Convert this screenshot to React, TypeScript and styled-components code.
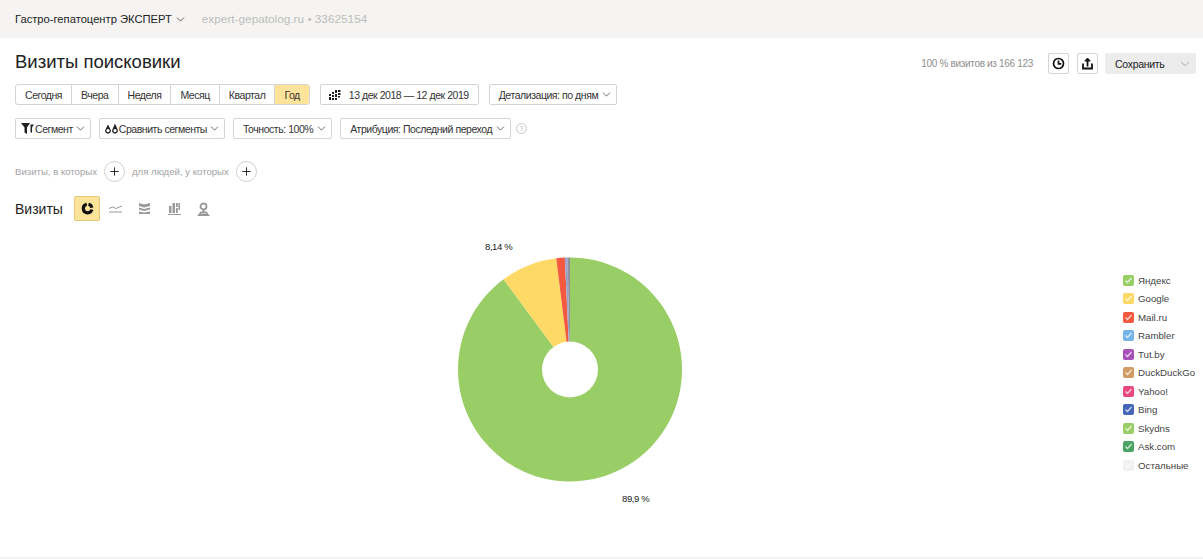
import React from "react";
import styled, { createGlobalStyle } from "styled-components";
import { ChevronDown, Plus } from "lucide-react";

const GlobalStyle = createGlobalStyle`
	html, body {
		margin: 0;
		padding: 0;
		background: #fff;
		color: #222;
		font-family: "Liberation Sans", Arial, sans-serif;
		font-size: 11px;
	}
`;

const periods = ["Сегодня", "Вчера", "Неделя", "Месяц", "Квартал", "Год"];

const legend = [
	{ name: "Яндекс", color: "#98ce65" },
	{ name: "Google", color: "#ffd966" },
	{ name: "Mail.ru", color: "#f4583f" },
	{ name: "Rambler", color: "#74b4e8" },
	{ name: "Tut.by", color: "#a651b8" },
	{ name: "DuckDuckGo", color: "#d39b66" },
	{ name: "Yahoo!", color: "#e9487f" },
	{ name: "Bing", color: "#4565b9" },
	{ name: "Skydns", color: "#98ce65" },
	{ name: "Ask.com", color: "#4aa364" },
	{ name: "Остальные", color: "#f1f1f0" },
];

const slices = [
	{ share: 89.9, color: "#98ce65" },
	{ share: 8.14, color: "#ffd966" },
	{ share: 1.22, color: "#f4583f" },
	{ share: 0.4, color: "#9aa4c8" },
	{ share: 0.34, color: "#8f8f9f" },
];

const CX = 570;
const CY = 139.5;
const R = 112;
const HOLE = 28;

const polar = (percent: number, radius: number) => {
	const a = (percent / 100) * Math.PI * 2;
	return [CX + Math.sin(a) * radius, CY - Math.cos(a) * radius];
};

const PieChart = () => {
	let start = 0;
	return (
		<ChartSvg viewBox="0 0 1100 290">
			{slices.map((s) => {
				const [x1, y1] = polar(start, R);
				const [x2, y2] = polar(start + s.share, R);
				const large = s.share > 50 ? 1 : 0;
				start += s.share;
				return <path key={s.color} fill={s.color} d={`M${CX} ${CY}L${x1} ${y1}A${R} ${R} 0 ${large} 1 ${x2} ${y2}Z`} />;
			})}
			<circle cx={CX} cy={CY} r={HOLE} fill="#fff" />
			<ChartLabel x={485} y={20}>8,14 %</ChartLabel>
			<ChartLabel x={622} y={272}>89,9 %</ChartLabel>
		</ChartSvg>
	);
};

const SmallChevron = () => <ChevronDown size={13} strokeWidth={1.3} />;

const App = () => {
	return (
		<Page>
			<GlobalStyle />
			<TopBar>
				<CounterName>Гастро-гепатоцентр ЭКСПЕРТ</CounterName>
				<SmallChevron />
				<CounterSite>expert-gepatolog.ru • 33625154</CounterSite>
			</TopBar>

			<Content>
				<TitleRow>
					<Title>Визиты поисковики</Title>
					<TitleTools>
						<Sampling>100 % визитов из 166 123</Sampling>
						<IconButton $mr={8}>
							<svg width="15" height="15" viewBox="0 0 15 15" fill="none" stroke="#111" strokeWidth="1.7">
								<circle cx="7.5" cy="7.5" r="5" />
								<path d="M7.5 4.5v3.3h2.800" />
							</svg>
						</IconButton>
						<IconButton $mr={7}>
							<svg width="15" height="15" viewBox="0 0 15 15" fill="none" stroke="#111" strokeWidth="1.8">
								<path d="M3 7.500v5h9v-5" />
								<path d="M7.500 10.500V3.500" />
								<path d="M4.800 5l2.700-3 2.700 3z" fill="#111" strokeWidth="1" />
							</svg>
						</IconButton>
						<SaveButton>
							Сохранить
							<ChevronDown size={14} strokeWidth={1} color="#777" />
						</SaveButton>
					</TitleTools>
				</TitleRow>

				<ControlRow $mt={10}>
					<PeriodGroup>
						{periods.map((p) => (
							<PeriodButton key={p} $active={p === "Год"}>{p}</PeriodButton>
						))}
					</PeriodGroup>
					<Button $ml={10} $pad={8}>
						<svg width="12" height="10" viewBox="0 0 12 10" fill="#222">
							<path d="M0 4h2v2H0zM0 7h2v3H0zM3 2h2v2H3zM3 5h2v2H3zM3 8h2v2H3zM6 0h2v3H6zM6 4h2v3H6zM6 8h2v2H6zM9 0h2.500v2H9zM9 3h2.500v2H9zM9 6h2v1.500H9z" />
						</svg>
						<DateText>13 дек 2018 — 12 дек 2019</DateText>
					</Button>
					<Button $ml={10}>
						Детализация: по дням
						<SmallChevron />
					</Button>
				</ControlRow>

				<ControlRow $mt={13}>
					<Button $pad={5}>
						<svg width="13" height="11" viewBox="0 0 13 11" fill="#222">
							<path d="M0 0h9L6 4.500V11L3.500 9.500V4.500zM9.500 1.500H13l-2 3V10l-1.500-1V5z" />
						</svg>
						Сегмент
						<SmallChevron />
					</Button>
					<Button $ml={8} $pad={5}>
						<svg width="13" height="11" viewBox="0 0 13 11" fill="#222">
							<path fillRule="evenodd" d="M3 1.500l2.800 5.500a2.900 2.900 0 1 1-5.600 0zM3 6a1.600 1.600 0 1 0 .01 0z" />
							<path fillRule="evenodd" d="M10 0.500l2.800 6.500a2.900 2.900 0 1 1-5.600 0zM10 6a1.600 1.600 0 1 0 .01 0z" />
						</svg>
						Сравнить сегменты
						<SmallChevron />
					</Button>
					<Button $ml={8}>
						Точность: 100%
						<SmallChevron />
					</Button>
					<Button $ml={8}>
						Атрибуция: Последний переход
						<SmallChevron />
					</Button>
					<HelpMark>?</HelpMark>
				</ControlRow>

				<FilterRow>
					<FilterLabel>Визиты, в которых</FilterLabel>
					<RoundAdd><Plus size={13} strokeWidth={1.6} color="#111" /></RoundAdd>
					<FilterLabel>для людей, у которых</FilterLabel>
					<RoundAdd><Plus size={13} strokeWidth={1.6} color="#111" /></RoundAdd>
				</FilterRow>

				<MetricRow>
					<MetricTitle>Визиты</MetricTitle>
					<ChartTypeActive>
						<svg width="13" height="13" viewBox="0 0 13 13" fill="none" stroke="#111" strokeWidth="3.200">
							<path d="M5.800 2.300a4.300 4.300 0 1 0 5 5.200" />
							<path d="M7.500 2.300a4.300 4.300 0 0 1 3.300 3.400" />
						</svg>
					</ChartTypeActive>
					<ChartType>
						<svg width="13" height="13" viewBox="0 0 13 13" fill="none" stroke="#999" strokeWidth="1">
							<path d="M0 6.500l3.500-1.500L7 6.500l6-2.500M0 10h13" />
						</svg>
					</ChartType>
					<ChartType>
						<svg width="13" height="13" viewBox="0 0 13 13" fill="#999">
							<path d="M1 1l5 1.500L12 1v3L6 5.500 1 4zM1 5.500l5 1.500 6-1.500v2l-6 1.500-5-1.500zM1 9.500l5 1 6-1V12H1z" />
						</svg>
					</ChartType>
					<ChartType>
						<svg width="13" height="13" viewBox="0 0 13 13" fill="#999">
							<path d="M1 4h2.500v7H1zM4.500 1H7v10H4.500zM8 1h1.800v4H8zM10.500 1H12v7h-1.500zM8 6h1.800v5H8zM0 12h13v1H0z" />
						</svg>
					</ChartType>
					<ChartType>
						<svg width="13" height="14" viewBox="0 0 13 14" fill="none" stroke="#999" strokeWidth="1.800">
							<circle cx="6.500" cy="4.500" r="3" />
							<path d="M6.500 8v2M2 13l2-2.500h5l2 2.500z" />
						</svg>
					</ChartType>
				</MetricRow>
			</Content>

			<ChartArea>
				<PieChart />
				<Legend>
					{legend.map((item) => (
						<LegendItem key={item.name}>
							<LegendBox $color={item.color}>
								<svg width="11" height="11" viewBox="0 0 11 11" fill="none" stroke="#fff" strokeOpacity="0.75" strokeWidth="1.300">
									<path d="M2.500 5.500l2 2 4-4.500" />
								</svg>
							</LegendBox>
							{item.name}
						</LegendItem>
					))}
				</Legend>
			</ChartArea>
		</Page>
	);
};

const Page = styled.div`
	width: 1203px;
	height: 559px;
	overflow: hidden;
	display: flex;
	flex-direction: column;
	box-sizing: border-box;
	border-bottom: 2px solid #f3f3f2;
`;

const TopBar = styled.div`
	height: 38px;
	flex: none;
	background: #f5f4f2;
	display: flex;
	align-items: center;
	padding-left: 15px;
	gap: 2px;
`;

const CounterName = styled.span`
	font-size: 11.200px;
	color: #222;
`;

const CounterSite = styled.span`
	margin-left: 13px;
	font-size: 11.800px;
	color: #bdbdbb;
`;

const Content = styled.div`
	padding: 0 7px 0 15px;
	flex: none;
`;

const TitleRow = styled.div`
	display: flex;
	align-items: center;
	justify-content: space-between;
	height: 21px;
	margin-top: 15px;
`;

const Title = styled.h1`
	margin: 0 0 3px;
	font-weight: 400;
	font-size: 18.500px;
	color: #222;
`;

const TitleTools = styled.div`
	display: flex;
	align-items: center;
`;

const Sampling = styled.span`
	font-size: 10px;
	letter-spacing: -0.32px;
	color: #8f8f8f;
	margin-right: 15px;
`;

const IconButton = styled.div<{ $mr: number }>`
	width: 21px;
	height: 21px;
	box-sizing: border-box;
	border: 1px solid #d4d4d4;
	border-radius: 2px;
	display: flex;
	align-items: center;
	justify-content: center;
	margin-right: ${(p) => p.$mr}px;
`;

const SaveButton = styled.div`
	width: 91px;
	height: 21px;
	box-sizing: border-box;
	background: #ececec;
	border-radius: 2px;
	display: flex;
	align-items: center;
	justify-content: space-between;
	padding: 0 4px 0 10px;
	font-size: 10.500px;
	letter-spacing: -0.3px;
	color: #222;
`;

const ControlRow = styled.div<{ $mt: number }>`
	display: flex;
	align-items: center;
	margin-top: ${(p) => p.$mt}px;
`;

const PeriodGroup = styled.div`
	display: flex;
	height: 21px;
	box-sizing: border-box;
	border: 1px solid #d4d4d4;
	border-radius: 3px;
	overflow: hidden;
`;

const PeriodButton = styled.div<{ $active?: boolean }>`
	display: flex;
	align-items: center;
	padding: 0 9px;
	font-size: 10.500px;
	letter-spacing: -0.45px;
	color: #333;
	background: ${(p) => (p.$active ? "#fee49a" : "transparent")};
	border-left: 1px solid #d4d4d4;
	&:first-child {
		border-left: none;
	}
`;

const Button = styled.div<{ $ml?: number; $pad?: number }>`
	display: flex;
	align-items: center;
	gap: ${(p) => (p.$pad ? 1 : 2)}px;
	height: 21px;
	box-sizing: border-box;
	border: 1px solid #d4d4d4;
	border-radius: 2px;
	margin-left: ${(p) => p.$ml || 0}px;
	padding: 0 3px 0 ${(p) => p.$pad || 9}px;
	font-size: 10.500px;
	letter-spacing: -0.45px;
	color: #333;
	white-space: nowrap;
`;

const DateText = styled.span`
	margin-left: 7px;
	margin-right: 6px;
`;

const HelpMark = styled.div`
	width: 9px;
	height: 9px;
	margin-left: 5px;
	border: 1px solid #c9c9c9;
	border-radius: 50%;
	font-size: 7px;
	line-height: 9px;
	text-align: center;
	color: #bbb;
`;

const FilterRow = styled.div`
	display: flex;
	align-items: center;
	gap: 7px;
	margin-top: 21px;
	height: 22px;
`;

const FilterLabel = styled.span`
	font-size: 9.600px;
	color: #a3a3a3;
`;

const RoundAdd = styled.div`
	width: 21px;
	height: 21px;
	box-sizing: border-box;
	border: 1px solid #cfcfcf;
	border-radius: 50%;
	display: flex;
	align-items: center;
	justify-content: center;
`;

const MetricRow = styled.div`
	display: flex;
	align-items: center;
	margin-top: 14px;
	height: 25px;
`;

const MetricTitle = styled.span`
	font-size: 14px;
	color: #222;
	width: 59px;
`;

const ChartTypeActive = styled.div`
	width: 26px;
	height: 25px;
	box-sizing: border-box;
	background: #fee49a;
	border: 1px solid #e5c877;
	border-radius: 2px;
	display: flex;
	align-items: center;
	justify-content: center;
	margin-right: 1px;
`;

const ChartType = styled.div`
	width: 29.300px;
	height: 25px;
	display: flex;
	align-items: center;
	justify-content: center;
`;

const ChartArea = styled.div`
	display: flex;
	margin-top: 9px;
`;

const ChartSvg = styled.svg`
	width: 1100px;
	height: 290px;
	flex: none;
`;

const ChartLabel = styled.text`
	font-family: "Liberation Sans", Arial, sans-serif;
	font-size: 9.500px;
	letter-spacing: -0.4px;
	fill: #222;
`;

const Legend = styled.div`
	margin-left: 23px;
	margin-top: 41px;
	display: flex;
	flex-direction: column;
`;

const LegendItem = styled.div`
	display: flex;
	align-items: center;
	height: 18.500px;
	gap: 4px;
	font-size: 9.700px;
	color: #444;
	white-space: nowrap;
`;

const LegendBox = styled.span<{ $color: string }>`
	width: 11px;
	height: 11px;
	border-radius: 2px;
	background: ${(p) => p.$color};
	display: flex;
`;

export default App;
